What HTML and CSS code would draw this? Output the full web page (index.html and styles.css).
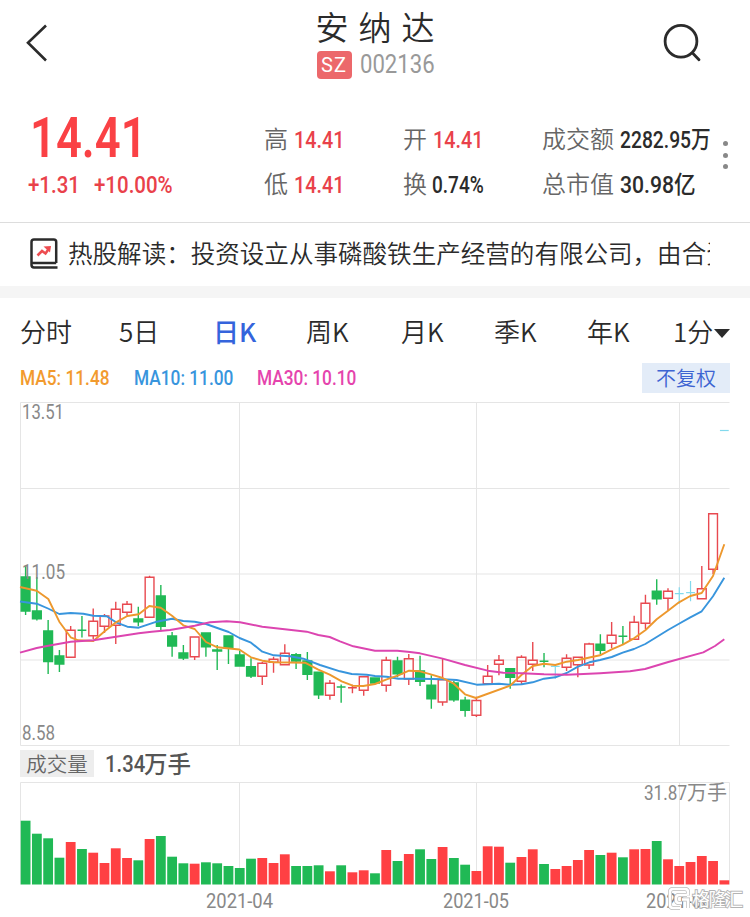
FILE: index.html
```html
<!DOCTYPE html>
<html lang="zh-CN">
<head>
<meta charset="utf-8">
<title>安纳达 002136</title>
<link rel="stylesheet" href="styles.css">
</head>
<body>
<header class="topbar">
  <svg class="back" width="24" height="40" viewBox="0 0 24 40"><path d="M21 2.500L3 19.800L21 37.500"/></svg>
  <div class="title">
    <h1>安纳达</h1>
    <div class="code"><span class="market">SZ</span><span class="num code-num">002136</span></div>
  </div>
  <svg class="search" width="40" height="42" viewBox="0 0 40 42"><circle cx="19" cy="18.300" r="15.900"/><path d="M30.500 30L37 36.800"/></svg>
</header>
<section class="quote">
  <div class="price">
    <div class="num last">14.41</div>
    <div class="change"><span class="num">+1.31</span><span class="num">+10.00%</span></div>
  </div>
  <dl class="stats">
    <div><dt>高</dt><dd class="num up">14.41</dd></div>
    <div><dt>开</dt><dd class="num up">14.41</dd></div>
    <div><dt>成交额</dt><dd class="num turnover">2282.95<b>万</b></dd></div>
    <div><dt>低</dt><dd class="num up">14.41</dd></div>
    <div><dt>换</dt><dd class="num percent">0.74%</dd></div>
    <div><dt>总市值</dt><dd class="num cap">30.98<b>亿</b></dd></div>
  </dl>
  <div class="more"><i></i><i></i><i></i></div>
</section>
<section class="news">
  <svg width="28" height="32" viewBox="0 0 28 32"><path class="book" d="M26.200 25V4Q26.200 1.500 23.700 1.500H4Q1.500 1.500 1.500 4V27Q1.500 29.400 4 29.400H27.500M2 25H26.200"/><path class="trend" d="M7.500 17.500L12 13L15.500 15.500L19 10.500"/><path class="tip" d="M13.500 8.500L21 8L20 14.500Z"/></svg>
  <p>热股解读：投资设立从事磷酸铁生产经营的有限公司，由合资</p>
</section>
<nav class="tabs">
  <a>分时</a><a>5日</a><a class="active">日K</a><a>周K</a><a>月K</a><a>季K</a><a>年K</a><a>1分<i></i></a>
</nav>
<div class="legend">
  <span class="num ma5">MA5: 11.48</span><span class="num ma10">MA10: 11.00</span><span class="num ma30">MA30: 10.10</span>
  <button>不复权</button>
</div>
<main class="chart">
  <svg id="kline" width="750" height="351" viewBox="0 398 750 351">
    <path class="grid" d="M20.500 402.500H729.500M20.500 488.500H729.500M20.500 574H729.500M20.500 660H729.500M20.500 745.500H729.500M20.500 402.500V745.500M239.500 402.500V745.500M476.500 402.500V745.500M679.500 402.500V745.500"/>
    <g id="candles"></g>
    <g id="averages"></g>
    <text class="axis" x="22" y="419" textLength="42" lengthAdjust="spacingAndGlyphs">13.51</text>
    <text class="axis" x="22" y="579" textLength="43" lengthAdjust="spacingAndGlyphs">11.05</text>
    <text class="axis" x="22" y="740" textLength="33" lengthAdjust="spacingAndGlyphs">8.58</text>
  </svg>
  <div class="volume-head"><span>成交量</span><strong><em class="num">1.34</em>万手</strong></div>
  <svg id="volume" width="750" height="138" viewBox="0 779 750 138">
    <path class="grid" d="M20.500 782.500H729.500M20.500 782.500V884.500M239.500 782.500V884.500M476.500 782.500V884.500M679.500 782.500V884.500M729.500 782.500V884.500"/>
    <g id="bars"></g>
    <text class="axis" x="644" y="799.500" textLength="43" lengthAdjust="spacingAndGlyphs">31.87</text>
    <text class="axis cjk" x="687" y="799.500">万手</text>
    <text class="axis" x="206" y="908" textLength="67" lengthAdjust="spacingAndGlyphs">2021-04</text>
    <text class="axis" x="443" y="908" textLength="66" lengthAdjust="spacingAndGlyphs">2021-05</text>
    <text class="axis" x="646" y="908" textLength="66" lengthAdjust="spacingAndGlyphs">2021-06</text>
    <g class="brand">
      <path class="halo" d="M688 895.500V892Q688 889 685 889H673Q670 889 670 892V905Q670 908 673 908H680M687 895H679Q676 895 676 898V900Q676 903 679 903H682M682 899.500H688V908"/>
      <path class="mark" d="M688 895.500V892Q688 889 685 889H673Q670 889 670 892V905Q670 908 673 908H680M687 895H679Q676 895 676 898V900Q676 903 679 903H682M682 899.500H688V908"/>
      <text x="692" y="906" textLength="51">格隆汇</text>
    </g>
  </svg>
</main>
<script src="chart.js"></script>
</body>
</html>
```

FILE: styles.css
```css
* { box-sizing: border-box; }
body { margin: 0; width: 750px; height: 917px; overflow: hidden; background: #fff; color: #2b2b2b; font-family: "Noto Sans CJK SC", sans-serif; font-weight: 350; }
.num { font-family: Roboto, "Noto Sans CJK SC", sans-serif; font-weight: 500; display: inline-block; transform: scaleX(.84); transform-origin: left center; white-space: nowrap; }
svg { display: block; }
.topbar { height: 100px; display: flex; justify-content: space-between; padding: 0 48px 0 25px; }
.back { margin-top: 23px; fill: none; stroke: #2b2b2b; stroke-width: 2.6; }
.search { margin-top: 23px; fill: none; stroke: #2b2b2b; stroke-width: 2.8; stroke-linecap: round; }
.title { width: 136px; margin-left: 46px; }
h1 { margin: 3px 0 0 5px; font-size: 33px; line-height: 46px; font-weight: 350; letter-spacing: 10px; white-space: nowrap; }
.code { display: flex; height: 28px; margin-top: 2px; padding-left: 6px; }
.market { flex: none; width: 35px; height: 28px; border-radius: 4px; background: #ec686b; color: #fff; font: 400 20px/29px Roboto, sans-serif; letter-spacing: 1px; text-align: center; }
.code-num { font-size: 25px; line-height: 28px; color: #999; margin-left: 8px; font-weight: 400; transform: scaleX(.885); }
.quote { height: 123px; border-bottom: 1px solid #ddd; display: flex; }
.price { width: 264px; padding-left: 28px; color: #fa4145; }
.last { height: 70px; margin-left: 2px; font-size: 55px; line-height: 76px; font-weight: 600; transform: scaleX(.825); }
.change { display: flex; color: #e9414a; font-size: 23px; line-height: 32px; }
.change span { width: 66px; transform: scaleX(.89); }
.stats { margin: 23px 0 0; display: grid; grid-template-columns: 139px 139px 174px; grid-auto-rows: 45px; width: 452px; }
.stats div { display: flex; height: 32px; line-height: 32px; font-size: 24px; }
dt { color: #666; white-space: nowrap; margin-top: -1px; }
dd { margin: 1px 0 0 6px; font-size: 23.5px; }
dd b { font-size: 24px; font-weight: 500; line-height: 1; }
dd.turnover { transform: scaleX(.82); }
dd.percent { transform: scaleX(.81); margin-left: 5px; }
dd.cap { transform: scaleX(.9); }
.up { color: #e9414a; }
.more { width: 20px; padding: 41px 0 0 7px; }
.more i { display: block; width: 5px; height: 5px; border-radius: 50%; background: #888; margin-bottom: 6.500px; }
.news { height: 63px; display: flex; padding: 14px 40px 0 30px; }
.news svg { margin-top: 1px; fill: none; stroke: #2b2b2b; stroke-width: 2.5; }
.news .trend { stroke: #ed4c50; stroke-width: 2.6; }
.news .tip { fill: #ed4c50; stroke: none; }
.news p { margin: -1px 0 0 10px; width: 642px; font-size: 24.55px; line-height: 34px; white-space: nowrap; overflow: hidden; }
.tabs { border-top: 12px solid #f5f5f5; height: 77px; display: grid; grid-template-columns: 99px 94px 93px 95px 93px 93px 86px 64px; padding: 15px 0 0 20px; font-size: 26px; line-height: 36px; white-space: nowrap; }
.tabs .active { color: #3564dc; font-weight: 500; }
.tabs i { display: inline-block; border: 8px solid transparent; border-top: 9px solid #2b2b2b; border-bottom: 0; margin: 0 0 4px 1px; }
.legend { height: 35px; display: flex; padding-left: 20px; font-size: 20px; line-height: 31px; }
.legend .num { transform: scaleX(.865); }
.ma5 { width: 114px; color: #f29a2e; }
.ma10 { width: 123px; color: #3895dd; }
.ma30 { width: 150px; color: #e544ad; }
.legend button { margin: 0 20px 0 auto; width: 88px; height: 30px; padding: 0; border: 0; background: #e3ecf8; color: #3d64d2; font: 350 20px/30px "Noto Sans CJK SC", sans-serif; }
.volume-head { height: 30px; padding: 1px 20px; display: flex; }
.volume-head span { width: 74px; height: 27px; background: #ededed; color: #666; font-size: 20.500px; line-height: 27px; text-align: center; }
.volume-head strong { margin-left: 11px; display: flex; color: #555; font-size: 23.5px; line-height: 26px; font-weight: 500; }
.volume-head em { width: 39px; font-style: normal; font-size: 23px; line-height: 29px; transform: scaleX(.88); }
.grid { fill: none; stroke: #e5e5e5; stroke-width: 1; }
.axis { font: 400 20px Roboto, sans-serif; fill: #888; }
.axis.cjk { font-family: "Noto Sans CJK SC", sans-serif; }
.rise { fill: none; stroke: #e84950; stroke-width: 1.4; }
.fall { fill: #20b955; stroke: #20b955; stroke-width: 1.4; }
.flat { fill: none; stroke: #82d9ed; stroke-width: 1.2; }
.bar-rise { fill: #ff4043; }
.bar-fall { fill: #20b955; }
.line { fill: none; stroke-width: 1.9; stroke-linejoin: round; }
.line5 { stroke: #ed982d; }
.line10 { stroke: #3895dd; }
.line30 { stroke: #dc45b0; }
.brand path { fill: none; }
.brand .halo { stroke: #bbb; stroke-width: 4; }
.brand .mark { stroke: #fff; stroke-width: 2.6; }
.brand text { font: 400 18px "Noto Sans CJK SC", sans-serif; fill: #fff; stroke: #b4b4b4; stroke-width: 1.8; paint-order: stroke; }
```

FILE: chart.js
```js
const STEP = 11.27, FIRST = 25.6, BASE = 884.5;
const center = i => FIRST + i * STEP;

// direction, body top, body bottom, high, low, volume top
const days = `g 577 611 566 615 820.7
g 611 618.7 577 620.5 833.7
g 631 661.5 620 674 838.3
g 656 664 650 672 857.7
r 630.3 657.3 626 657 842
g 630.3 631 616 637.5 849
r 621.3 635.7 608.5 639 852.7
r 616 626.3 614 633 863
r 609.3 625.3 601.7 644 848.3
r 604.3 612.3 601 615.7 858
g 619 621.7 606.7 626.3 860.3
r 577.3 617.3 575.7 617.3 839
g 596 626.3 585 631.3 836
g 636 646 632 656.7 856.7
g 653 658 645 660 863.3
r 637 656.7 637 660 863.7
g 633 646.7 633 656.7 862.3
g 650 651 645 670 863.3
g 636 648 636 664 866
g 655 666 650.7 666 868
g 666.7 676 658.3 678 858.7
r 663.3 676.3 662 685 858
r 659.3 662.3 656.7 672.7 863
r 653.3 664.7 644.3 665 854.3
g 654.7 661 653 669 866
g 661 674.3 652 680 866
g 672.3 694.7 672 699 865.3
r 683.3 695.3 680 699.7 871.3
g 687 687.6 684.5 702.7 865.3
r 687.7 688.5 684.7 693.3 872.3
r 676.7 690.3 676 695.7 870.3
g 678 683 678 683 873.3
r 660.3 685.3 656.7 691.7 850
g 661 673.7 656.7 677.3 861
r 658.7 679 654 685 854
g 671 681.3 655.7 686 849.3
g 685.3 698.7 675.3 708.7 859
r 679.7 702 658.3 705.7 847
g 683 699.7 681 701.7 858
g 700.3 710.3 696.7 716.7 864.7
r 700.5 715.2 696.7 717 871
r 676.3 683.7 665 684 846.3
r 660.3 664.3 655 675.3 846.7
g 668.7 677.3 668.7 688.7 862.7
r 657.3 681.3 655.3 684.3 857
r 660.3 664.3 642 671 849.3
g 661.3 662 653 667.3 864
c 666.3 666.3 665 678.7 869
r 658.3 667.3 654.3 671 866
r 657.3 664.8 657.3 677.3 860
r 644 665 642.7 669 850
g 644.3 650.3 634.3 654.3 855
r 635.3 643.3 622 648.3 852.7
g 636.3 636.8 626 644.3 857.3
r 622.3 639.3 615.7 639.3 849.3
r 603.3 623.3 594.7 629 849
g 591.3 598.7 579.3 604.7 841
r 591.3 598.3 588.3 610 859.3
c 593.7 593.7 587.3 604 866
c 592.7 592.7 581 601.3 862
r 588.7 598.7 566 598.7 856
r 513.7 569.3 513.7 574 861
c 430.5 430.5 430.5 430.5 880.3`.split("\n").map(l => l.split(" ").map((v, i) => i ? +v : v));

const kinds = { r: "rise", g: "fall", c: "flat" };
let candles = "", bars = "";
days.forEach(([k, top, bottom, high, low, vol], i) => {
  const x = center(i);
  const half = 4.4;
  const kind = kinds[k];
  if (bottom - top < 1) {
    candles += `<path class="${kind}" d="M${x - half} ${top}h${half * 2}M${x} ${high}V${low}"/>`;
  } else {
    candles += `<path class="${kind}" d="M${x - half} ${top}H${x + half}V${bottom}H${x - half}ZM${x} ${high}V${top}M${x} ${bottom}V${low}"/>`;
  }
  bars += `<rect class="bar-${k === "g" ? "fall" : "rise"}" x="${x - 4.9}" y="${vol}" width="9.8" height="${BASE - vol}"/>`;
});
document.getElementById("candles").innerHTML = candles;
document.getElementById("bars").innerHTML = bars;

const lines = {
  line10: "20,601.5 36.7,603.7 48,608.500 59.3,614 70.7,613 83.3,613.7 93.3,615.7 106.7,616.3 116,622.3 127.3,626.7 138.7,627.7 156.7,621.7 172,618.7 183.3,621 194.7,621.7 206,624 217.3,628 228.7,632 239.5,638 251,642.7 262.3,651.7 273.7,655.3 290,656.3 303.3,658.7 320,665 340,671.3 351.7,674 366.7,674.7 375,676 386.7,676.7 398.3,678.7 420,678.7 442.7,679.3 456.7,680 476.7,684.7 499,683.7 510,684.7 521.7,684.3 532.7,682.3 544,678.7 555.3,677.3 566.7,673 578,666.7 589.3,662.3 600,660 611.7,657 622.7,652.7 634,649 645.3,644 656.7,637 668,630 679,623.7 690.3,617.3 701.7,611.3 713,596.3 724.3,577.7",
  line5: "20,587 36.7,590.7 48.3,599 59.3,621.7 70.7,637.3 78.3,640.3 93.3,641 105,631 116,622.3 127.3,616 138.7,614.3 149.3,606 160.7,607.7 172,615.7 183.3,625.3 194.7,629 206,642 217.3,647.3 239.3,649.5 251,657.3 262.3,660.7 273.7,662.3 305,662.7 318.3,669.7 329.7,674.7 341.7,681.3 352.7,685.7 363.3,686 375,684 386.7,679.3 398.3,675.3 409,670.7 420,671.3 431.7,674.7 442.7,678 453.3,683.3 465,694.3 476,698 510,685.7 521.7,674.7 532.7,666 544,663.7 555.3,665 566.7,661.7 578,660 600,655.3 611.7,649.3 622.7,644.7 634,638.3 645.3,630.3 656.7,619.3 668,610.7 679,602.3 690.3,596 701.7,593 713,576 724.3,544.3",
  line30: "20,652.7 36.7,648 48.3,645.7 70.7,641.7 93.3,640.3 116,636.7 138.7,633.3 151.7,631.7 170,630 194.7,625.7 210,622.3 226.7,621.3 240,622.3 262.3,626.7 284.7,629.3 306.7,631.7 318.3,635 329.7,637 340,641.3 353.3,646.3 375,650.7 397.3,650.7 410,652 420,653.3 442.7,658.7 465,665 487.7,670.7 503.3,672.7 521.7,673.3 544,674.3 566.7,674.7 578,674.3 600,673.3 630,671.3 645,669 668.3,662 703.3,652.3 715,646 724.3,639.3"
};
document.getElementById("averages").innerHTML = Object.entries(lines)
  .map(([name, points]) => `<polyline class="line ${name}" points="${points}"/>`).join("");
```
